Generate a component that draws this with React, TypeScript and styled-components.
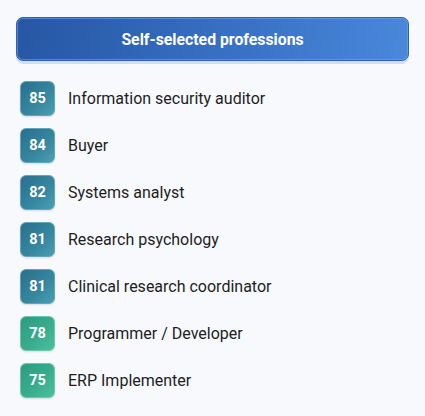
import React from 'react';
import styled, { createGlobalStyle } from 'styled-components';

const GlobalStyle = createGlobalStyle`
  body {
    margin: 0;
    background: #f8f9fc;
    font-family: Roboto, "Liberation Sans", sans-serif;
  }
`;

interface Profession {
  score: number;
  title: string;
}

const professions: Profession[] = [
  { score: 85, title: 'Information security auditor' },
  { score: 84, title: 'Buyer' },
  { score: 82, title: 'Systems analyst' },
  { score: 81, title: 'Research psychology' },
  { score: 81, title: 'Clinical research coordinator' },
  { score: 78, title: 'Programmer / Developer' },
  { score: 75, title: 'ERP Implementer' },
];

const Page = styled.div`
  padding: 17px 16px 0 16px;
  width: 425px;
  height: 416px;
  box-sizing: border-box;
`;

const Header = styled.div`
  height: 44px;
  border-radius: 7px;
  background: linear-gradient(100deg, #2557a4 0%, #3a73c6 60%, #4a88da 100%);
  border: 1px solid #2e62b0;
  box-shadow: inset 0 0 0 1px rgba(120, 170, 235, 0.55), 0 3px 0 #cfe0f5;
  display: flex;
  align-items: center;
  justify-content: center;
  color: #ffffff;
  font-weight: 700;
  font-size: 15.8px;
  box-sizing: border-box;
`;

const List = styled.div`
  display: flex;
  flex-direction: column;
  gap: 12px;
  margin-top: 20px;
  padding-left: 4px;
`;

const Row = styled.div`
  display: flex;
  align-items: center;
  gap: 13px;
`;

const Badge = styled.div<{ $tone: 'teal' | 'green' }>`
  width: 35px;
  height: 35px;
  border-radius: 6px;
  box-sizing: border-box;
  display: flex;
  align-items: center;
  justify-content: center;
  color: #ffffff;
  font-weight: 700;
  font-size: 14.5px;
  background: ${p =>
    p.$tone === 'teal'
      ? 'linear-gradient(135deg, #2a6f8e 0%, #37879f 60%, #4a9fb4 100%)'
      : 'linear-gradient(135deg, #2f9a7f 0%, #3aae8e 60%, #4cc09e 100%)'};
  border: 1px solid ${p => (p.$tone === 'teal' ? '#5fa7bd' : '#6cc9ab')};
  box-shadow: 0 1px 2px rgba(0, 0, 0, 0.12);
`;

const Title = styled.span`
  font-size: 16px;
  color: #1d1d22;
`;

export default function App() {
  return (
    <Page>
      <GlobalStyle />
      <Header>Self-selected professions</Header>
      <List>
        {professions.map((p, i) => (
          <Row key={i}>
            <Badge $tone={p.score >= 80 ? 'teal' : 'green'}>{p.score}</Badge>
            <Title>{p.title}</Title>
          </Row>
        ))}
      </List>
    </Page>
  );
}
